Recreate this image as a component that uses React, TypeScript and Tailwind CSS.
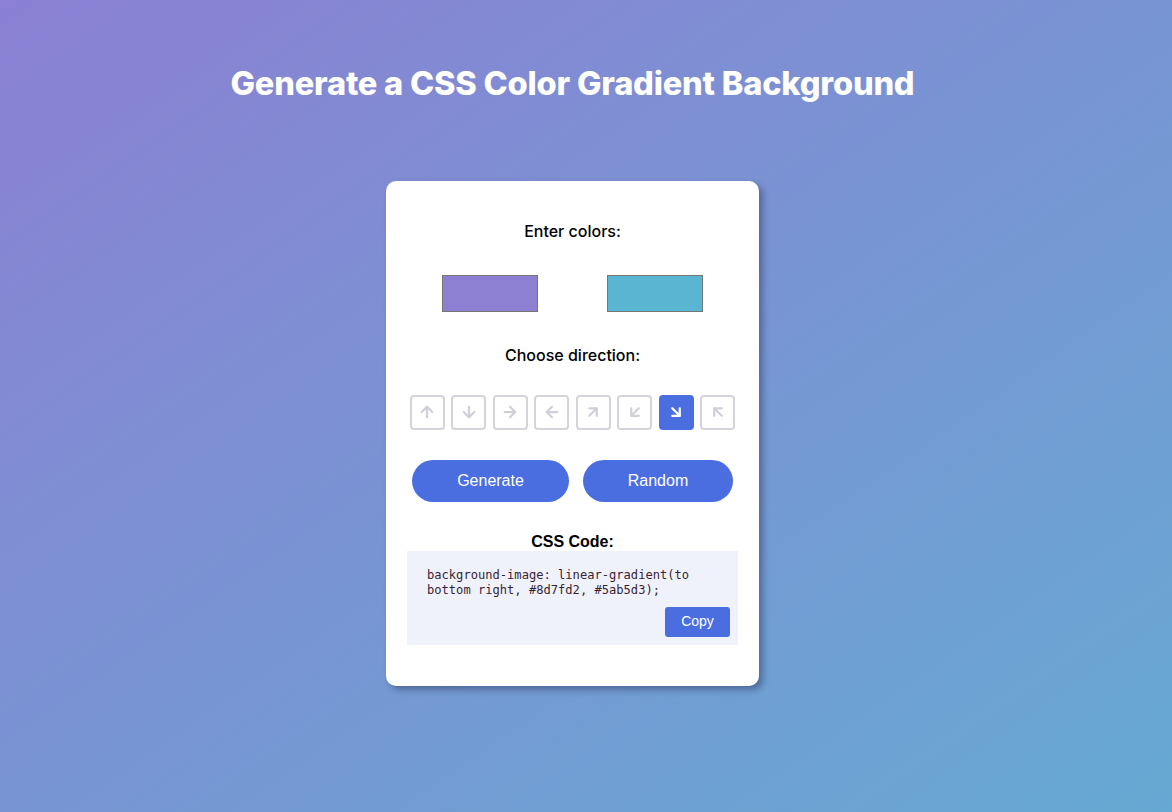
import { ArrowUp, ArrowDown, ArrowRight, ArrowLeft, ArrowUpRight, ArrowDownLeft, ArrowDownRight, ArrowUpLeft } from "lucide-react";

const DIRS = [
  { Icon: ArrowUp, label: "to top" },
  { Icon: ArrowDown, label: "to bottom" },
  { Icon: ArrowRight, label: "to right" },
  { Icon: ArrowLeft, label: "to left" },
  { Icon: ArrowUpRight, label: "to top right" },
  { Icon: ArrowDownLeft, label: "to bottom left" },
  { Icon: ArrowDownRight, label: "to bottom right" },
  { Icon: ArrowUpLeft, label: "to top left" },
];

export default function App() {
  const active = 6;
  return (
    <div className="flex min-h-[812px] w-full flex-col items-center bg-[linear-gradient(to_bottom_right,#8b80d3,#66a9d3)] pr-[27px] font-['Inter',sans-serif]">
      <h1 className="mt-[59px] text-[32.6px] font-extrabold tracking-[-0.2px] text-white">
        Generate a CSS Color Gradient Background
      </h1>

      <div className="mt-[73px] flex w-[373px] flex-col items-center rounded-[10px] bg-white px-[21px] pt-[40px] pb-[41px] shadow-[4px_4px_6px_rgba(40,50,90,0.45)]">
        <p className="text-[16px] font-medium leading-5 text-black">Enter colors:</p>

        <div className="mt-[34px] flex gap-[69px]">
          <div className="h-[37px] w-[96px] border border-[#767676] bg-[#8d7fd2]" />
          <div className="h-[37px] w-[96px] border border-[#767676] bg-[#5ab5d3]" />
        </div>

        <p className="mt-[33px] text-[16px] font-medium leading-5 text-black">Choose direction:</p>

        <div className="mt-[30px] flex gap-[6.5px]">
          {DIRS.map(({ Icon, label }, i) => (
            <button
              key={label}
              aria-label={label}
              className={
                i === active
                  ? "flex h-[35px] w-[35px] items-center justify-center rounded-[4px] border-2 border-[#4a6ee0] bg-[#4a6ee0] text-white"
                  : "flex h-[35px] w-[35px] items-center justify-center rounded-[4px] border-2 border-[#d4d5dc] bg-white text-[#d0d1d8]"
              }
            >
              <Icon className="h-[18px] w-[18px]" strokeWidth={3} />
            </button>
          ))}
        </div>

        <div className="mt-[30px] flex gap-[14px] font-['Liberation_Sans',Arial,sans-serif]">
          <button className="h-[42px] w-[157px] rounded-full bg-[#4a6ee0] text-[16px] text-white">
            Generate
          </button>
          <button className="h-[42px] w-[150px] rounded-full bg-[#4a6ee0] text-[16px] text-white">
            Random
          </button>
        </div>

        <p className="mt-[31px] font-['Liberation_Sans',Arial,sans-serif] text-[16px] font-bold leading-[18px] text-black">
          CSS Code:
        </p>

        <div className="flex w-[331px] flex-col bg-[#eff2fa] pl-[20px] pr-[8px] pt-[17px] pb-[8px]">
          <code className="pr-[12px] font-['DejaVu_Sans_Mono',monospace] text-[12.1px] leading-[15px] text-[#3a1f33]">
            background-image: linear-gradient(to bottom right, #8d7fd2, #5ab5d3);
          </code>
          <button className="mt-[9px] ml-auto h-[30px] w-[65px] rounded-[3px] bg-[#4a6ee0] font-['Liberation_Sans',Arial,sans-serif] text-[14px] text-white">
            Copy
          </button>
        </div>
      </div>
    </div>
  );
}
